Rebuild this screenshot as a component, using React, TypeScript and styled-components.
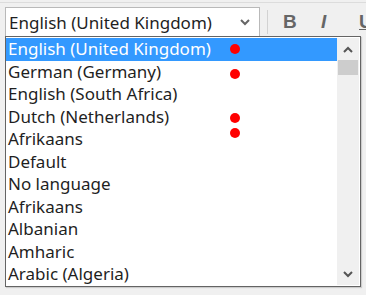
import React from "react";
import styled, { createGlobalStyle } from "styled-components";

const Global = createGlobalStyle`
  html, body { margin: 0; padding: 0; }
  body {
    background: #f0f0f0;
    font-family: "Noto Sans", "Open Sans", sans-serif;
    width: 366px;
    height: 295px;
    overflow: hidden;
  }
`;

const Page = styled.div`
  position: relative;
  width: 366px;
  height: 295px;
  border-top: 1px solid #dcdcdc;
  margin-top: 2px;
  box-sizing: border-box;
`;

const Toolbar = styled.div`
  display: flex;
  align-items: center;
  padding: 4px 0 0 5px;
  height: 30px;
  box-sizing: content-box;
  white-space: nowrap;
`;

const Combo = styled.div`
  flex: 0 0 255px;
  height: 30px;
  box-sizing: border-box;
  border: 1px solid #b9b9b9;
  background: #fff;
  display: flex;
  align-items: center;
  padding: 0 9px 0 3px;
  font-size: 17px;
  color: #1f1f1f;
`;

const ComboText = styled.span`
  flex: 1;
  white-space: nowrap;
`;

const Separator = styled.div`
  flex: 0 0 1px;
  height: 24px;
  background: #d2d2d2;
  margin: 0 15px 0 7px;
`;

const ToolButton = styled.span<{ $italic?: boolean; $underline?: boolean }>`
  flex: 0 0 auto;
  width: 14px;
  font-size: 19px;
  font-weight: bold;
  color: #666;
  font-style: ${(p) => (p.$italic ? "italic" : "normal")};
  text-decoration: ${(p) => (p.$underline ? "underline" : "none")};
  margin-right: 24px;
  font-family: "Liberation Sans", sans-serif;
`;

const List = styled.div`
  position: absolute;
  left: 5px;
  top: 33px;
  width: 356px;
  height: 251px;
  box-sizing: border-box;
  border: 1px solid #646464;
  background: #fff;
  display: flex;
  box-shadow: 1px 1px 1px rgba(0, 0, 0, 0.15);
`;

const Items = styled.div`
  flex: 1;
  display: flex;
  flex-direction: column;
  padding-top: 1px;
  overflow: hidden;
`;

const Item = styled.div<{ $selected?: boolean }>`
  position: relative;
  flex: 0 0 22.5px;
  line-height: 22.5px;
  font-size: 17px;
  padding-left: 2px;
  white-space: nowrap;
  color: ${(p) => (p.$selected ? "#fff" : "#1f1f1f")};
  background: ${(p) => (p.$selected ? "#3399ff" : "transparent")};
`;

const Dot = styled.span<{ $offset?: number }>`
  position: absolute;
  left: 224px;
  top: ${(p) => 6 + (p.$offset ?? 0)}px;
  width: 10px;
  height: 10px;
  border-radius: 50%;
  background: #ff0000;
`;

const Scrollbar = styled.div`
  flex: 0 0 22px;
  background: #f0f0f0;
  display: flex;
  flex-direction: column;
  margin: 1px 1px 1px 0;
`;

const Arrow = styled.div`
  height: 22px;
  display: flex;
  align-items: center;
  justify-content: center;
`;

const Track = styled.div`
  flex: 1;
`;

const Thumb = styled.div`
  height: 15px;
  background: #cdcdcd;
  margin: 0 1px;
`;

const Chevron = ({ up, color = "#555" }: { up?: boolean; color?: string }) => (
  <svg width="10" height="7" viewBox="0 0 10 7">
    <path
      d={up ? "M1 6 L5 2 L9 6" : "M1 1 L5 5 L9 1"}
      fill="none"
      stroke={color}
      strokeWidth="2"
    />
  </svg>
);

const items: { label: string; dot?: boolean; dotOffset?: number }[] = [
  { label: "German (Germany)", dot: true, dotOffset: 2 },
  { label: "English (South Africa)" },
  { label: "Dutch (Netherlands)", dot: true, dotOffset: 1 },
  { label: "Afrikaans", dot: true, dotOffset: -6 },
  { label: "Default" },
  { label: "No language" },
  { label: "Afrikaans" },
  { label: "Albanian" },
  { label: "Amharic" },
  { label: "Arabic (Algeria)" },
];

export default function App() {
  return (
    <>
      <Global />
      <Page>
        <Toolbar>
          <Combo>
            <ComboText>English (United Kingdom)</ComboText>
            <Chevron color="#666" />
          </Combo>
          <Separator />
          <ToolButton>B</ToolButton>
          <ToolButton $italic>I</ToolButton>
          <ToolButton $underline>U</ToolButton>
        </Toolbar>
        <List>
          <Items>
            <Item $selected>
              English (United Kingdom)
              <Dot $offset={0} />
            </Item>
            {items.map((it, i) => (
              <Item key={i}>
                {it.label}
                {it.dot && <Dot $offset={it.dotOffset} />}
              </Item>
            ))}
          </Items>
          <Scrollbar>
            <Arrow>
              <Chevron up />
            </Arrow>
            <Track>
              <Thumb />
            </Track>
            <Arrow>
              <Chevron />
            </Arrow>
          </Scrollbar>
        </List>
      </Page>
    </>
  );
}
